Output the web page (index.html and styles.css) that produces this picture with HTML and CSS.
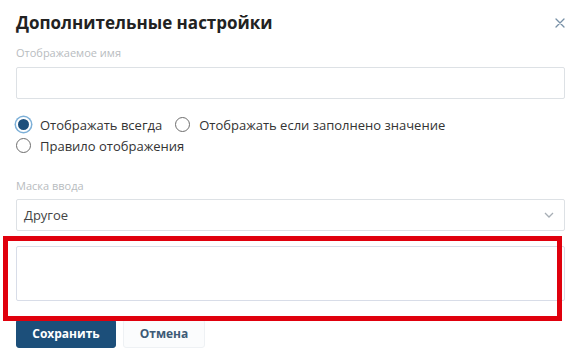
FILE: index.html
```html
<!DOCTYPE html>
<html>
  <head>
    <meta charset="UTF-8" />
    <title>Дополнительные настройки</title>
    <link rel="stylesheet" href="styles.css">
  </head>
  <body>
    <div class="dialog">
      <div class="dialog-header">
        <h1 class="dialog-title">Дополнительные настройки</h1>
        <button class="close" type="button" aria-label="Закрыть">
          <svg width="10" height="10" viewBox="0 0 10 10">
            <path d="M1 1 L9 9 M9 1 L1 9" stroke="currentColor" stroke-width="1.3" fill="none" stroke-linecap="round" />
          </svg>
        </button>
      </div>

      <div class="field-label">Отображаемое имя</div>
      <div class="text-input"></div>

      <div class="radio-group">
        <label class="radio"><span class="radio-mark checked"></span>Отображать всегда</label>
        <label class="radio"><span class="radio-mark"></span>Отображать если заполнено значение</label>
        <label class="radio"><span class="radio-mark"></span>Правило отображения</label>
      </div>

      <div class="field-label mask-label">Маска ввода</div>
      <div class="select">
        <span>Другое</span>
        <svg width="10" height="6" viewBox="0 0 10 6">
          <polyline points="1,1 5,5 9,1" stroke="currentColor" stroke-width="1.3" fill="none" />
        </svg>
      </div>

      <div class="mask-input-wrap">
        <div class="text-input mask-input"></div>
        <div class="highlight"></div>
      </div>

      <div class="buttons">
        <button class="btn btn-primary" type="button">Сохранить</button>
        <button class="btn btn-secondary" type="button">Отмена</button>
      </div>
    </div>
  </body>
</html>
```

FILE: styles.css
```css
html {
  font-family: "Open Sans", sans-serif;
}

body {
  margin: 0;
  background: #fff;
  color: #333;
}

.dialog {
  padding: 11px 10px 0 16px;
}

.dialog-header {
  display: flex;
  justify-content: space-between;
  align-items: center;
  height: 24px;
}

.dialog-title {
  margin: 0;
  font-size: 17px;
  line-height: 24px;
  font-weight: 700;
  color: #222;
}

.close {
  border: none;
  background: none;
  padding: 0;
  width: 10px;
  height: 10px;
  color: #7790a6;
  display: flex;
}

.field-label {
  margin-top: 11px;
  font-size: 11px;
  line-height: 14px;
  color: #b8bcc0;
}

.text-input {
  margin-top: 7px;
  height: 32px;
  box-sizing: border-box;
  border: 1px solid #dde1e5;
  border-radius: 2px;
}

.radio-group {
  margin-top: 15px;
  display: flex;
  flex-wrap: wrap;
  column-gap: 13px;
}

.radio {
  display: flex;
  align-items: center;
  gap: 9px;
  height: 21px;
  font-size: 13px;
  color: #333;
}

.radio-mark {
  width: 15px;
  height: 15px;
  box-sizing: border-box;
  border-radius: 50%;
  border: 1.5px solid #6d6d6d;
}

.radio-mark.checked {
  border: 2px solid #fff;
  background: #1d4f7c;
  box-shadow: 0 0 0 1.5px #7db0d8;
}

.mask-label {
  margin-top: 23px;
}

.select {
  margin-top: 6px;
  height: 32px;
  box-sizing: border-box;
  border: 1px solid #dde1e5;
  border-radius: 2px;
  display: flex;
  align-items: center;
  justify-content: space-between;
  padding: 0 10px 0 7px;
  font-size: 13px;
  color: #444;
}

.select svg {
  color: #a7aeb5;
}

.mask-input-wrap {
  position: relative;
  margin-top: 15px;
}

.mask-input {
  margin-top: 0;
  height: 55px;
  border-color: #d8dde8;
}

.highlight {
  position: absolute;
  top: -10px;
  left: -13px;
  right: 3px;
  bottom: -20px;
  border: 5px solid #e0000d;
}

.buttons {
  margin-top: 18px;
  display: flex;
  gap: 7px;
}

.btn {
  height: 29px;
  font-family: inherit;
  font-size: 12px;
  font-weight: 700;
  border-radius: 3px;
  padding: 0;
}

.btn-primary {
  width: 100px;
  background: #1c4f7a;
  border: 1px solid #1c4f7a;
  color: #fff;
}

.btn-secondary {
  width: 82px;
  background: #fbfcfd;
  border: 1px solid #eef1f4;
  color: #3d5a76;
}
```
